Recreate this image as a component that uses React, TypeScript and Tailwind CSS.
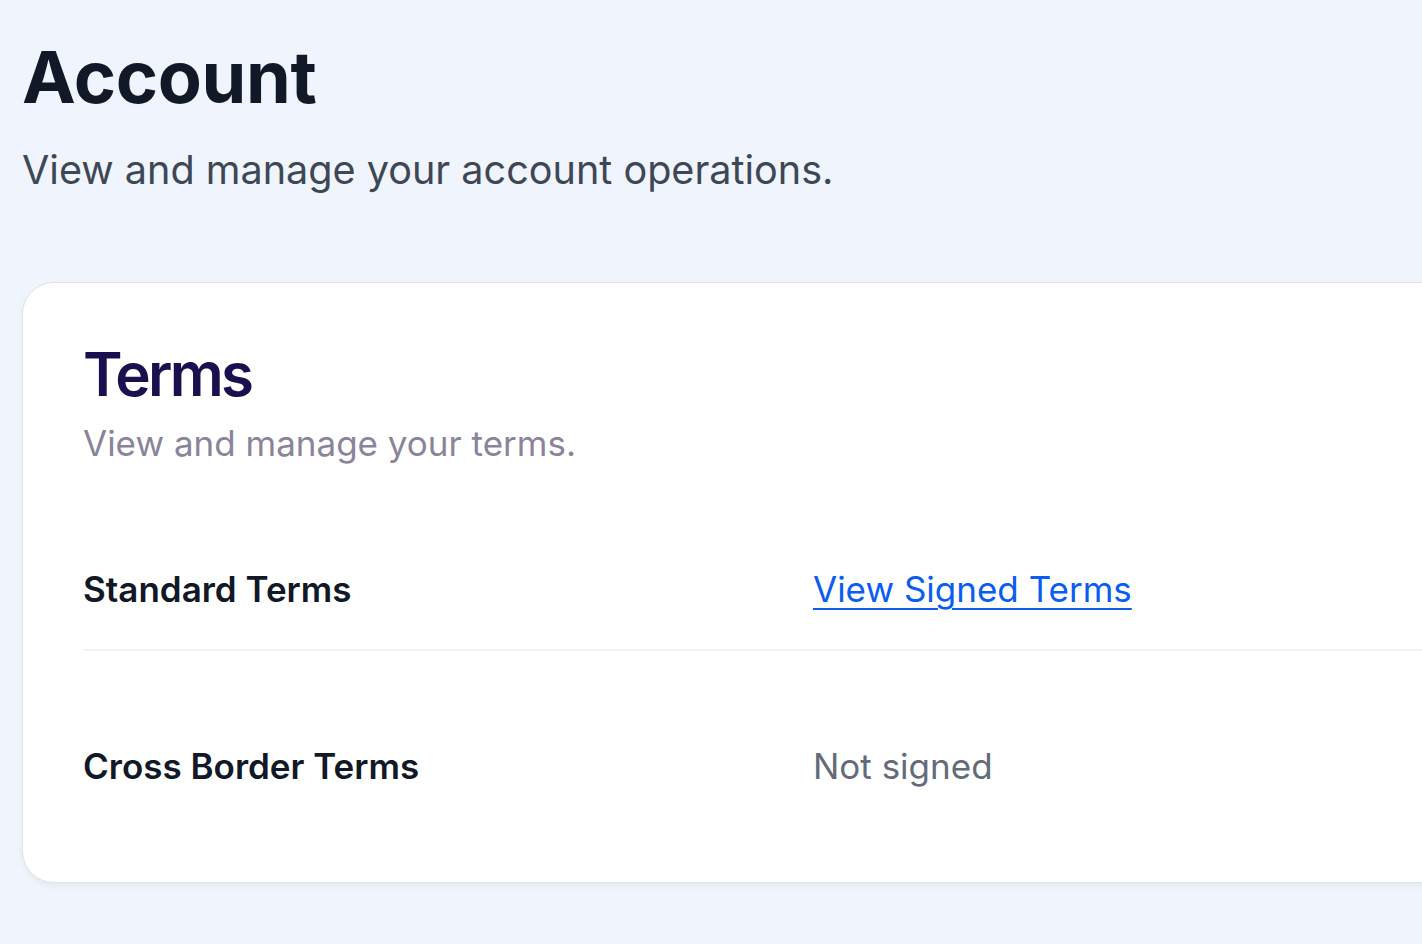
import React from 'react';

const rows = [
  { label: 'Standard Terms', value: 'View Signed Terms', link: true },
  { label: 'Cross Border Terms', value: 'Not signed', link: false },
];

export default function App() {
  return (
    <div
      className="h-[944px] w-[1422px] overflow-hidden bg-[#f0f4fc] pl-[22px] pt-[41px]"
      style={{ fontFamily: 'Inter, "Noto Sans", sans-serif' }}
    >
      <h1 className="text-[72px] font-bold leading-none tracking-[-0.005em] text-[#111827]">
        Account
      </h1>
      <p className="mt-[33px] text-[39.6px] leading-[48px] text-[#3d4756]">
        View and manage your account operations.
      </p>

      <div className="mt-[88px] w-[1500px] rounded-[32px] border border-[#e3e3e6] bg-white pl-[60px] pt-[59px] shadow-[0_3px_6px_rgba(0,0,0,0.05)]">
        <h2 className="text-[60px] font-semibold leading-[64px] tracking-[-0.045em] text-[#1b104f]">
          Terms
        </h2>
        <p className="mt-[15px] text-[35px] leading-[44px] text-[#8a849b]">
          View and manage your terms.
        </p>

        <div className="mt-[62px]">
          <div className="flex border-b-2 border-[#f1f0f6] pb-[38px] pt-[40px]">
            <div className="w-[730px] text-[35px] font-semibold leading-[44px] text-[#111827]">
              {rows[0].label}
            </div>
            <a
              href="#"
              className="text-[35px] leading-[44px] text-[#0b5cf0] underline decoration-2 underline-offset-[6px]"
            >
              {rows[0].value}
            </a>
          </div>
          <div className="flex pb-[94px] pt-[93px]">
            <div className="w-[730px] text-[35px] font-semibold leading-[44px] text-[#111827]">
              {rows[1].label}
            </div>
            <div className="text-[35px] leading-[44px] text-[#646b78]">{rows[1].value}</div>
          </div>
        </div>
      </div>
    </div>
  );
}
